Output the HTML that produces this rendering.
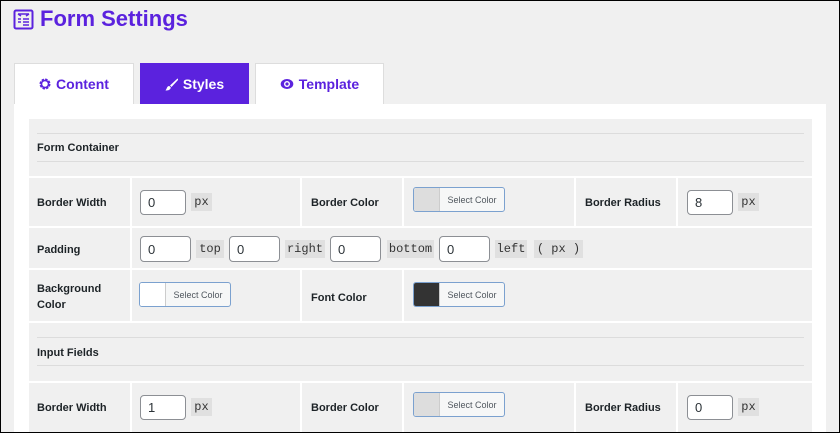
<!DOCTYPE html>
<html><head><style>
*{margin:0;padding:0;box-sizing:border-box}
html,body{width:840px;height:433px;overflow:hidden}
body{background:#f0f0f0;font-family:"Liberation Sans",sans-serif;position:relative}
.frame{position:absolute;left:0;top:0;width:840px;height:433px;border:1px solid #000;z-index:9}
.a{position:absolute}
.title{left:13px;top:6px;font-size:22px;font-weight:bold;color:#5b22de;display:flex;align-items:center;gap:6px}
.tab{top:63px;height:41px;background:#fff;border:1px solid #ddd;border-bottom:none;color:#5b22de;font-weight:bold;font-size:14px;display:flex;align-items:center;justify-content:center;gap:5px}
.tab.on{background:#5b22de;color:#fff;border-color:#5b22de}
.panel{left:14px;top:104px;width:812px;height:329px;background:#fff}
.inner{left:29px;top:119px;width:783px;height:314px;background:#f0f0f0}
.hl{height:1px;background:#dcdcdc;left:37px;width:767px}
.sh{left:37px;font-size:11px;font-weight:bold;color:#1d2327}
.vs{width:2px;background:#fff}
.hs{height:2px;background:#fff;left:29px;width:783px}
.lb{font-size:11px;font-weight:bold;color:#1d2327;line-height:16px}
.in{background:#fff;border:1px solid #8c8f94;border-radius:4px;font-size:13px;color:#2c3338;padding-left:7px;display:flex;align-items:center}
.u{background:#e0e0e0;font-family:"Liberation Mono",monospace;font-size:12px;color:#333;display:flex;align-items:center;justify-content:center;height:18px}
.cb{width:92px;height:25px;border:1px solid #7ba1cf;border-radius:3px;background:#f6f7f7;display:flex;overflow:hidden}
.cb i{width:26px;border-right:1px solid #ccc;display:block}
.cb span{flex:1;font-size:9px;color:#50575e;display:flex;align-items:center;justify-content:center}
</style></head><body>
<div class="frame"></div>
<div class="a title"><svg width="21" height="21" viewBox="0 0 21 21"><rect x="1.5" y="1.5" width="18" height="18" rx="1.5" fill="none" stroke="#5b22de" stroke-width="2"/><path d="M5 5h11M5 5l3 2M16 5l-3 2" stroke="#5b22de" stroke-width="1.5" fill="none"/><path d="M5 10h3M10 10h6M5 13h3M10 13h6M10 16h6" stroke="#5b22de" stroke-width="1.6"/></svg>Form Settings</div>
<div class="a tab" style="left:14px;width:120px"><svg width="12" height="12" viewBox="0 0 12 12"><circle cx="6" cy="6" r="4.2" fill="none" stroke="#5b22de" stroke-width="2.6" stroke-dasharray="2.2 1.1"/><circle cx="6" cy="6" r="3.6" fill="none" stroke="#5b22de" stroke-width="1.6"/></svg>Content</div>
<div class="a tab on" style="left:140px;width:109px"><svg width="13" height="13" viewBox="0 0 13 13"><path d="M12.5 0.5L5 7.5l1.5 1.5 7-7.5z" fill="#fff"/><path d="M4.3 8c-2.3 0-2.3 2.5-3.8 4.5 2.5 0 5-.5 5.3-3z" fill="#fff"/></svg>Styles</div>
<div class="a tab" style="left:255px;width:129px"><svg width="14" height="12" viewBox="0 0 14 12"><ellipse cx="7" cy="6" rx="6.3" ry="5" fill="#5b22de"/><circle cx="7" cy="6" r="3" fill="#fff"/><circle cx="7" cy="6" r="1.6" fill="#5b22de"/></svg>Template</div>
<div class="a panel"></div>
<div class="a inner"></div>
<div class="a hl" style="top:133px"></div><div class="a hl" style="top:161px"></div>
<div class="a sh" style="top:142px">Form Container</div>
<div class="a hs" style="top:176px"></div>
<div class="a hs" style="top:226px"></div>
<div class="a hs" style="top:268px"></div>
<div class="a hs" style="top:321px"></div>
<div class="a hl" style="top:337px"></div><div class="a hl" style="top:365px"></div>
<div class="a sh" style="top:347px">Input Fields</div>
<div class="a hs" style="top:381px"></div>
<div class="a vs" style="left:130px;top:178px;height:143px"></div>
<div class="a vs" style="left:300px;top:178px;height:48px"></div>
<div class="a vs" style="left:402px;top:178px;height:48px"></div>
<div class="a vs" style="left:574px;top:178px;height:48px"></div>
<div class="a vs" style="left:676px;top:178px;height:48px"></div>
<div class="a vs" style="left:300px;top:270px;height:51px"></div>
<div class="a vs" style="left:402px;top:270px;height:51px"></div>
<div class="a vs" style="left:130px;top:383px;height:50px"></div>
<div class="a vs" style="left:300px;top:383px;height:50px"></div>
<div class="a vs" style="left:402px;top:383px;height:50px"></div>
<div class="a vs" style="left:574px;top:383px;height:50px"></div>
<div class="a vs" style="left:676px;top:383px;height:50px"></div>
<div class="a lb" style="left:37px;top:195px">Border Width</div>
<div class="a in" style="left:140px;top:190px;width:46px;height:25px">0</div>
<div class="a u" style="left:191px;top:193px;width:21px">px</div>
<div class="a lb" style="left:311px;top:195px">Border Color</div>
<div class="a cb" style="left:413px;top:187px"><i style="background:#ddd"></i><span>Select Color</span></div>
<div class="a lb" style="left:585px;top:195px">Border Radius</div>
<div class="a in" style="left:687px;top:190px;width:46px;height:25px">8</div>
<div class="a u" style="left:738px;top:193px;width:21px">px</div>
<div class="a lb" style="left:37px;top:242px">Padding</div>
<div class="a in" style="left:140px;top:236px;width:51px;height:26px">0</div>
<div class="a u" style="left:196px;top:240px;width:28px">top</div>
<div class="a in" style="left:229px;top:236px;width:51px;height:26px">0</div>
<div class="a u" style="left:285px;top:240px;width:40px">right</div>
<div class="a in" style="left:330px;top:236px;width:51px;height:26px">0</div>
<div class="a u" style="left:387px;top:240px;width:47px">bottom</div>
<div class="a in" style="left:439px;top:236px;width:51px;height:26px">0</div>
<div class="a u" style="left:495px;top:240px;width:32px">left</div>
<div class="a u" style="left:534px;top:240px;width:49px">( px )</div>
<div class="a lb" style="left:37px;top:281px">Background<br>Color</div>
<div class="a cb" style="left:139px;top:282px"><i style="background:#fff"></i><span>Select Color</span></div>
<div class="a lb" style="left:311px;top:290px">Font Color</div>
<div class="a cb" style="left:413px;top:282px"><i style="background:#333"></i><span>Select Color</span></div>
<div class="a lb" style="left:37px;top:400px">Border Width</div>
<div class="a in" style="left:140px;top:395px;width:46px;height:25px">1</div>
<div class="a u" style="left:191px;top:398px;width:21px">px</div>
<div class="a lb" style="left:311px;top:400px">Border Color</div>
<div class="a cb" style="left:413px;top:392px"><i style="background:#ddd"></i><span>Select Color</span></div>
<div class="a lb" style="left:585px;top:400px">Border Radius</div>
<div class="a in" style="left:687px;top:395px;width:46px;height:25px">0</div>
<div class="a u" style="left:738px;top:398px;width:21px">px</div>
</body></html>
